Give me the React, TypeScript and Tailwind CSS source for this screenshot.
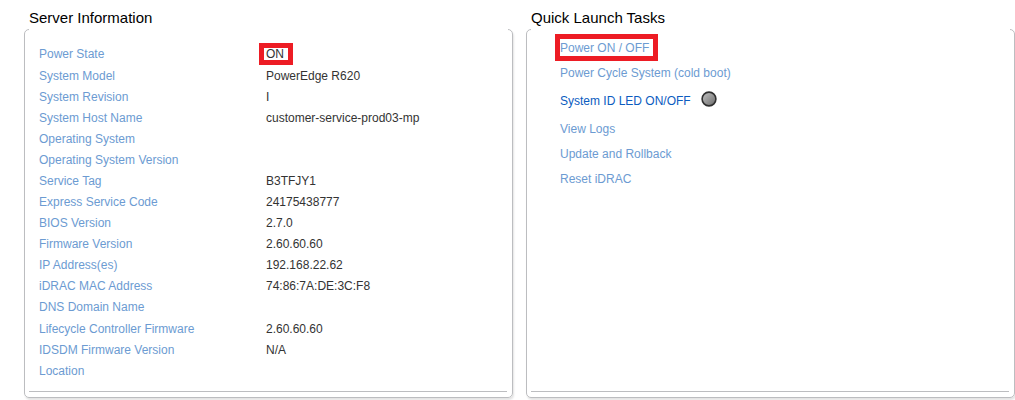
import type { ReactNode } from "react";

const serverInfo = [
  { label: "Power State", value: "ON", marked: true },
  { label: "System Model", value: "PowerEdge R620" },
  { label: "System Revision", value: "I" },
  { label: "System Host Name", value: "customer-service-prod03-mp" },
  { label: "Operating System", value: "" },
  { label: "Operating System Version", value: "" },
  { label: "Service Tag", value: "B3TFJY1" },
  { label: "Express Service Code", value: "24175438777" },
  { label: "BIOS Version", value: "2.7.0" },
  { label: "Firmware Version", value: "2.60.60.60" },
  { label: "IP Address(es)", value: "192.168.22.62" },
  { label: "iDRAC MAC Address", value: "74:86:7A:DE:3C:F8" },
  { label: "DNS Domain Name", value: "", tall: true },
  { label: "Lifecycle Controller Firmware", value: "2.60.60.60" },
  { label: "IDSDM Firmware Version", value: "N/A" },
  { label: "Location", value: "" },
];

function Panel({ title, children }: { title: string; children: ReactNode }) {
  return (
    <section className="flex flex-1 flex-col">
      <h2 className="pt-[7px] pb-px pl-[5px] text-[15px] leading-[21px] text-black">{title}</h2>
      <div className="relative flex flex-1 flex-col rounded-[5px] border border-[#bcbdc0] px-1 pb-[5px] shadow-[1px_2px_2px_#e4e4e4]">
        {/* leaves only the corners of the top border */}
        <div className="absolute -top-px right-1 left-1 h-px bg-white" />
        <div className="flex-1">{children}</div>
        <hr className="mr-px border-t border-[#bcbdc0]" />
      </div>
    </section>
  );
}

function Led() {
  return (
    <svg className="ml-[10px] size-4" viewBox="0 0 16 16" aria-hidden="true">
      <defs>
        <linearGradient id="led" x1="0" y1="0" x2="1" y2="1">
          <stop offset="0" stopColor="#c4c4c4" />
          <stop offset="1" stopColor="#696969" />
        </linearGradient>
      </defs>
      <circle cx="8" cy="8" r="6.9" fill="url(#led)" stroke="#303030" strokeWidth="1.6" />
    </svg>
  );
}

function Task({ children }: { children: ReactNode }) {
  return (
    <a href="#" className="block leading-[25px]">
      {children}
    </a>
  );
}

export default function App() {
  return (
    <main className="flex gap-[13px] bg-white pb-0.5 pl-6 font-['Liberation_Sans',Arial,sans-serif] text-[12px] text-[#6c9bd2]">
      <Panel title="Server Information">
        <table className="mt-[13px] mb-[10px] ml-[10px] border-collapse text-left">
          <tbody>
            {serverInfo.map((row) => (
              <tr key={row.label} className={row.marked || row.tall ? "h-[22px]" : "h-[21px]"}>
                <th scope="row" className="w-[227px] p-0 leading-5 font-normal">
                  {row.label}
                </th>
                <td className="p-0 leading-5 text-[#333333]">
                  {row.marked ? (
                    <span className="relative block w-5">
                      {row.value}
                      <span className="absolute -top-px -left-[7px] h-[22px] w-[34px] border-5 border-[#ed1c24]" />
                    </span>
                  ) : (
                    row.value
                  )}
                </td>
              </tr>
            ))}
          </tbody>
        </table>
      </Panel>

      <Panel title="Quick Launch Tasks">
        <nav className="mt-[6px] ml-[29px]">
          <Task>
            <span className="relative inline-block">
              Power ON / OFF
              <span className="absolute -top-0.5 -left-[5px] h-[27px] w-[103px] border-5 border-[#ed1c24]" />
            </span>
          </Task>
          <Task>Power Cycle System (cold boot)</Task>
          <div className="flex h-[31px] items-start">
            <a href="#" className="leading-[31px] text-[#0b5cbf]">
              System ID LED ON/OFF
            </a>
            <span className="pt-[5px]">
              <Led />
            </span>
          </div>
          <Task>View Logs</Task>
          <Task>Update and Rollback</Task>
          <Task>Reset iDRAC</Task>
        </nav>
      </Panel>
    </main>
  );
}
